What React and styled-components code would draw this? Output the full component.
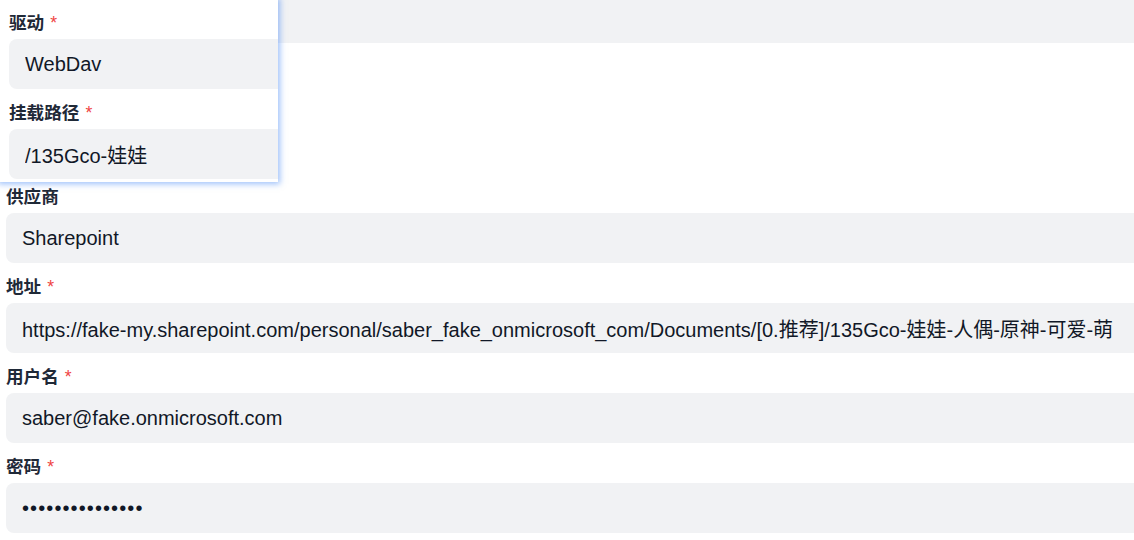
import React from "react";
import styled, { createGlobalStyle } from "styled-components";

const GlobalStyle = createGlobalStyle`
  html, body {
    margin: 0;
    padding: 0;
    background: #ffffff;
    overflow: hidden;
  }
  body {
    font-family: "Liberation Sans", "Noto Sans CJK SC", sans-serif;
    color: #1f2937;
  }
  * { box-sizing: border-box; }
`;

const Page = styled.div`
  position: relative;
  width: 1134px;
  height: 540px;
  overflow: hidden;
  background: #ffffff;
`;

const Form = styled.form`
  display: flex;
  flex-direction: column;
  gap: 11px;
  width: 1260px;
  padding-left: ${(p) => p.$inset || 6}px;
  margin-top: ${(p) => p.$offset || 0}px;
`;

const Field = styled.div`
  display: flex;
  flex-direction: column;
  gap: 3px;
`;

const Label = styled.label`
  font-size: 17.6px;
  font-weight: 600;
  line-height: 26px;
  color: #1f2937;
  white-space: nowrap;
`;

const Required = styled.span`
  color: #ef4444;
  margin-left: 6px;
  font-weight: 400;
`;

const Input = styled.input`
  height: 50px;
  width: ${(p) => (p.$narrow ? "240px" : "100%")};
  border: none;
  outline: none;
  border-radius: 8px;
  background: #f1f2f4;
  padding: 0 16px;
  font-family: "Liberation Sans", "Noto Sans CJK SC", sans-serif;
  font-size: 20px;
  color: #111827;
  letter-spacing: ${(p) => (p.type === "password" ? "1.1px" : "normal")};
`;

const CheckRow = styled.div`
  display: flex;
  align-items: center;
  gap: 8px;
  height: 29px;
  font-size: 17.6px;
  color: #1f2937;
`;

const Check = styled.input`
  width: 18px;
  height: 18px;
  margin: 0;
`;

const Panel = styled.div`
  position: absolute;
  top: 0;
  left: 0;
  width: 278px;
  height: 182px;
  overflow: hidden;
  background: #ffffff;
  padding: 10px 0 3px 0;
  box-shadow: 0 0 6px 2px rgba(59, 130, 246, 0.5);
  z-index: 2;
`;

const Star = () => <Required>*</Required>;

export default function App() {
  return (
    <Page>
      <GlobalStyle />
      <Form $offset={-7} onSubmit={(e) => e.preventDefault()}>
        <Input defaultValue="/135Gco-娃娃" />
        <Field>
          <Label>排序</Label>
          <Input $narrow defaultValue="0" />
        </Field>
        <CheckRow>
          <Check type="checkbox" />
          禁用
        </CheckRow>
        <Field>
          <Label>供应商</Label>
          <Input defaultValue="Sharepoint" />
        </Field>
        <Field>
          <Label>
            地址<Star />
          </Label>
          <Input defaultValue="https://fake-my.sharepoint.com/personal/saber_fake_onmicrosoft_com/Documents/[0.推荐]/135Gco-娃娃-人偶-原神-可爱-萌" />
        </Field>
        <Field>
          <Label>
            用户名<Star />
          </Label>
          <Input defaultValue="saber@fake.onmicrosoft.com" />
        </Field>
        <Field>
          <Label>
            密码<Star />
          </Label>
          <Input type="password" defaultValue="abcdefghijklmno" />
        </Field>
      </Form>
      <Panel>
        <Form $inset={9} onSubmit={(e) => e.preventDefault()}>
          <Field>
            <Label>
              驱动<Star />
            </Label>
            <Input defaultValue="WebDav" />
          </Field>
          <Field>
            <Label>
              挂载路径<Star />
            </Label>
            <Input defaultValue="/135Gco-娃娃" />
          </Field>
        </Form>
      </Panel>
    </Page>
  );
}
